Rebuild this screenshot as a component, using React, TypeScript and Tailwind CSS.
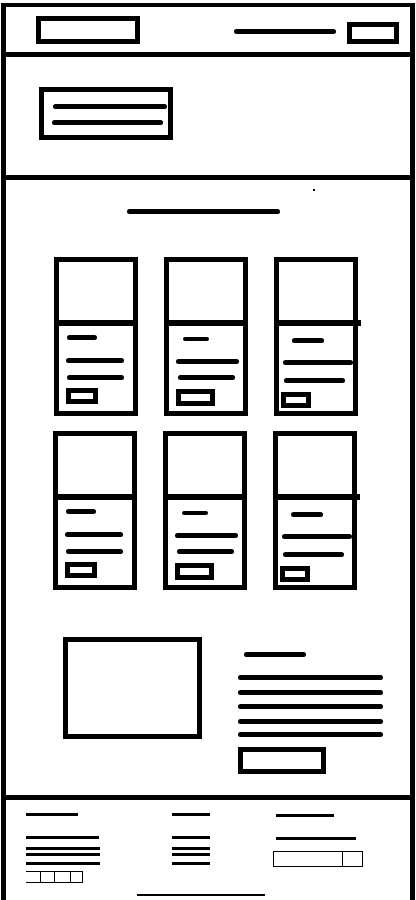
import React from "react";

type CardStyle = {
  short: string;
  long: string;
  second: string;
  button: string;
  divider: string;
};

const cardStyles: CardStyle[] = [
  {
    short: "mt-[9px] ml-[8px] w-[30px] h-[5px]",
    long: "mt-[18px] ml-[7px] w-[58px] h-[5px]",
    second: "mt-[12px] ml-[8px] w-[57px] h-[5px]",
    button: "mt-[8px] ml-[7px] w-[32px] h-[16px]",
    divider: "-mx-[5px]",
  },
  {
    short: "mt-[11px] ml-[14px] w-[26px] h-[4px]",
    long: "mt-[18px] ml-[7px] w-[63px] h-[5px]",
    second: "mt-[11px] ml-[9px] w-[57px] h-[5px]",
    button: "mt-[9px] ml-[7px] w-[39px] h-[17px]",
    divider: "-mx-[5px]",
  },
  {
    short: "mt-[12px] ml-[13px] w-[32px] h-[5px]",
    long: "mt-[17px] ml-[4px] w-[70px] h-[5px]",
    second: "mt-[13px] ml-[5px] w-[61px] h-[5px]",
    button: "mt-[9px] ml-[2px] w-[30px] h-[16px]",
    divider: "-ml-[5px] -mr-[8px]",
  },
];

const Bar = ({ className }: { className: string }) => (
  <div className={`bg-black rounded-full ${className}`} />
);

const Card = ({ s }: { s: CardStyle }) => (
  <div className="w-[84px] h-[159px] border-[5px] border-black flex flex-col">
    <div className="h-[58px] shrink-0" />
    <div className={`h-[6px] bg-black shrink-0 ${s.divider}`} />
    <div className="flex flex-col">
      <Bar className={s.short} />
      <Bar className={s.long} />
      <Bar className={s.second} />
      <div className={`border-[5px] border-black ${s.button}`} />
    </div>
  </div>
);

const FooterLine = ({ className }: { className: string }) => (
  <div className={`bg-black h-[3px] ${className}`} />
);

export default function App() {
  return (
    <div className="w-[416px] h-[900px] overflow-hidden bg-white font-['Liberation_Sans',sans-serif]">
      <div className="ml-[1px] mt-[3px] w-[414px] h-[897px] border-x-[5px] border-t-4 border-black flex flex-col">
        {/* Header */}
        <header className="h-[50px] shrink-0 border-b-[5px] border-black flex items-center justify-between">
          <div className="ml-[30px] w-[104px] h-[28px] border-[5px] border-black" />
          <div className="flex items-center gap-[11px] mt-[7px] mr-[11px]">
            <Bar className="w-[102px] h-[5px] mb-[3px]" />
            <div className="w-[52px] h-[22px] border-[5px] border-black" />
          </div>
        </header>

        {/* Hero */}
        <section className="h-[123px] shrink-0 border-b-[5px] border-black pt-[30px] pl-[33px]">
          <div className="w-[134px] h-[53px] border-[5px] border-black flex flex-col pt-[12px]">
            <Bar className="ml-[9px] w-[114px] h-[5px]" />
            <Bar className="mt-[11px] ml-[8px] w-[111px] h-[5px]" />
          </div>
        </section>

        {/* Products */}
        <section className="h-[620px] shrink-0 border-b-[5px] border-black flex flex-col pt-[9px]">
          <div className="ml-[307px] w-[2px] h-[2px] bg-black" />
          <Bar className="mt-[18px] ml-[121px] w-[153px] h-[5px]" />

          <div className="mt-[43px] ml-[48px] grid grid-cols-[84px_84px_84px] gap-x-[26px] gap-y-[15px]">
            {cardStyles.map((s, i) => (
              <Card key={`a${i}`} s={s} />
            ))}
            {cardStyles.map((s, i) => (
              <div key={`b${i}`} className="-ml-px">
                <Card s={s} />
              </div>
            ))}
          </div>

          {/* Feature */}
          <div className="mt-[47px] flex">
            <div className="ml-[57px] w-[139px] h-[102px] border-[5px] border-black" />
            <div className="ml-[36px] w-[145px] flex flex-col pt-[15px]">
              <Bar className="ml-[6px] w-[62px] h-[5px]" />
              <Bar className="mt-[18px] w-[145px] h-[5px]" />
              <Bar className="mt-[10px] w-[145px] h-[5px]" />
              <Bar className="mt-[9px] w-[145px] h-[5px]" />
              <Bar className="mt-[10px] w-[145px] h-[5px]" />
              <Bar className="mt-[8px] w-[145px] h-[5px]" />
              <div className="mt-[10px] w-[88px] h-[27px] border-[5px] border-black" />
            </div>
          </div>
        </section>

        {/* Footer */}
        <footer className="flex-1 flex flex-col pt-[13px]">
          <div className="flex">
            <div className="ml-[20px] w-[146px] flex flex-col">
              <FooterLine className="w-[52px]" />
              <FooterLine className="mt-[20px] w-[73px]" />
              <FooterLine className="mt-[8px] w-[74px]" />
              <FooterLine className="mt-[3px] w-[74px]" />
              <FooterLine className="mt-[6px] w-[74px]" />
              <div className="mt-[6px] flex h-[12px]">
                <div className="w-[15px] border-y border-r border-black" />
                <div className="w-[14px] border-y border-r border-black" />
                <div className="w-[16px] border-y border-r border-black" />
                <div className="w-[12px] border-y border-r border-black" />
              </div>
            </div>
            <div className="w-[101px] flex flex-col">
              <FooterLine className="w-[38px]" />
              <FooterLine className="mt-[20px] w-[38px]" />
              <FooterLine className="mt-[8px] w-[38px]" />
              <FooterLine className="mt-[3px] w-[38px]" />
              <FooterLine className="mt-[6px] w-[38px]" />
            </div>
            <div className="flex flex-col pt-px">
              <FooterLine className="ml-[3px] w-[58px]" />
              <FooterLine className="mt-[20px] ml-[3px] w-[80px]" />
              <div className="mt-[11px] flex w-[90px] h-[16px] border border-black">
                <div className="w-[69px] border-r border-black" />
                <div className="flex-1" />
              </div>
            </div>
          </div>
          <div className="mt-[11px] ml-[131px] w-[128px] h-[2px] bg-black" />
        </footer>
      </div>
    </div>
  );
}
